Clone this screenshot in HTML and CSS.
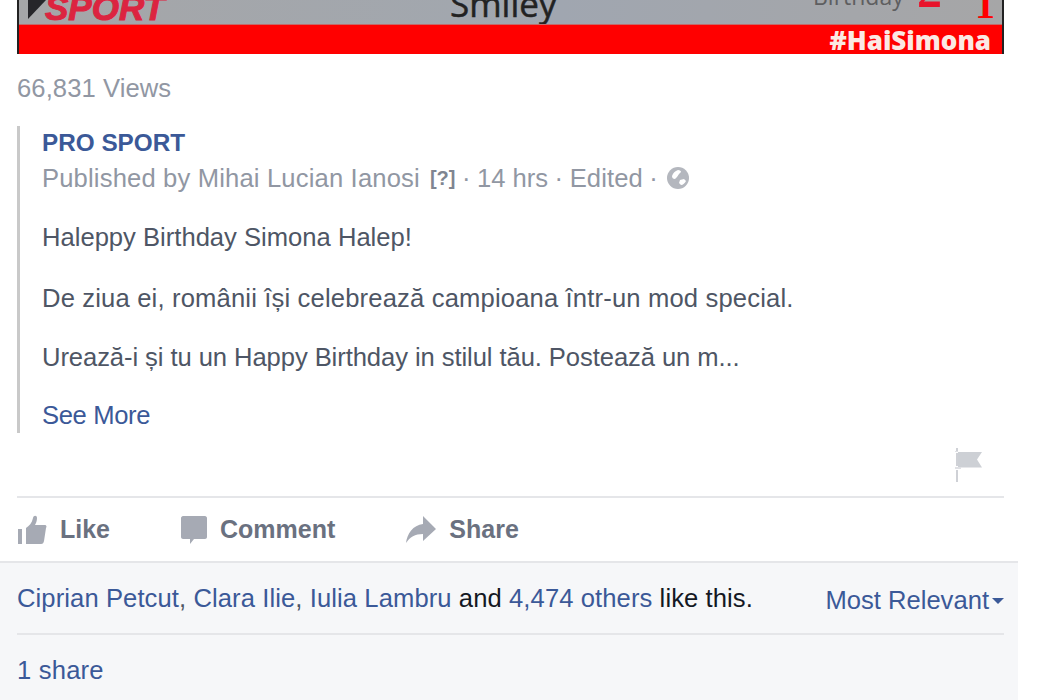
FILE: index.html
```html
<!DOCTYPE html>
<html lang="en">
<head>
	<meta charset="UTF-8">
	<title>PRO SPORT post</title>
	<link rel="stylesheet" href="styles.css">
</head>
<body>
	<div class="wrap">
		<div class="main">
			<div class="video">
				<div class="video-pic">
					<svg class="logo-arrow" width="18" height="19" viewBox="0 0 18 19"><path d="M0 0h18L0 19z" fill="#26262a"/></svg>
					<span class="logo">SPORT</span>
					<span class="smiley">Smiley</span>
					<span class="bday">Birthday</span>
					<span class="num-a">2</span>
					<span class="num-b">1</span>
				</div>
				<div class="video-bar"><span class="tag">#HaiSimona</span></div>
			</div>
			<div class="views">66,831 Views</div>

			<div class="quote">
				<a class="page-name">PRO SPORT</a>
				<div class="meta">
					<span class="by">Published by Mihai Lucian Ianosi</span>
					<span class="hint">[?]</span>
					<span class="dot">·</span>
					<span>14 hrs</span>
					<span class="dot">·</span>
					<span class="edited">Edited</span>
					<span class="dot">·</span>
					<svg class="globe" width="22" height="22" viewBox="0 0 22 22">
						<circle cx="11" cy="11" r="11" fill="#b4b7be"/>
						<path d="M5 9c1-3 3-5 6-6 2 0 3 1 3 2l-2 2-2 3-2 2c-2 0-3-1-3-3zM13 13l4-1 2 2c-1 2-3 4-5 4l-2-2z" fill="#fff"/>
					</svg>
				</div>
				<p class="txt">Haleppy Birthday Simona Halep!</p>
				<p class="txt line-b">De ziua ei, românii își celebrează campioana într-un mod special.</p>
				<p class="txt line-c">Urează-i și tu un Happy Birthday in stilul tău. Postează un m...</p>
				<a class="more">See More</a>
			</div>

			<div class="flag-row">
				<svg class="flag" width="28" height="34" viewBox="0 0 28 34">
					<path d="M3 4h24l-5 7.500 5 8H3z" fill="#cdd0d5"/>
					<path d="M1 0h2v3H1zM1 5h2v13H1zM1 22h2v12H1z" fill="#cfd1d6"/>
					<path d="M0 3h3v1H0zM0 19h6v2H0z" fill="#dfe0e4"/>
				</svg>
			</div>

			<div class="actions">
				<a class="action">
					<svg width="30" height="30" viewBox="0 0 30 30">
						<path d="M1 14h4v15H1zM9 13c3-2 6-5 7-10 .5-3 4-3 4 0 0 3-1 5-2 7h10c1.500 0 2 2 1 3l-2 13c-.5 2-1 3-3 3H9z" fill="#a6aab4"/>
					</svg>
					Like
				</a>
				<a class="action">
					<svg width="26" height="28" viewBox="0 0 26 28">
						<path d="M2 0h22c1 0 2 1 2 2v19c0 1-1 2-2 2H13l-4 5v-5H2c-1 0-2-1-2-2V2C0 1 1 0 2 0z" fill="#a6aab4"/>
					</svg>
					Comment
				</a>
				<a class="action">
					<svg width="30" height="28" viewBox="0 0 30 28">
						<path d="M17 0l13 13-13 12v-7C9 18 4 21 0 27c1-9 7-18 17-19z" fill="#a6aab4"/>
					</svg>
					Share
				</a>
			</div>
		</div>

		<div class="foot">
			<div class="likes">
				<span class="names"><a>Ciprian Petcut</a>, <a>Clara Ilie</a>, <a>Iulia Lambru</a> <em>and</em> <a>4,474 others</a> <em>like this.</em></span>
				<a class="sort">Most Relevant<i class="caret"></i></a>
			</div>
			<div class="shares"><a>1 share</a></div>
		</div>
	</div>
</body>
</html>
```

FILE: styles.css
```css
html, body{ margin: 0; padding: 0; background: #fff;}
body{ height: 700px; overflow: hidden; font-family: "Liberation Sans", Arial, sans-serif; font-size: 25.6px; color: #4e5665;}
a{ color: #3b5998; text-decoration: none;}
p{ margin: 0;}

.wrap{ width: 1018px;}
.main{ padding: 0 14px 0 17px; border-bottom: 2px solid #e5e6e9;}

.video{ display: flex; flex-direction: column; height: 54px; overflow: hidden; background: #f00; border: solid #222; border-width: 0 2px 0 2px; box-sizing: border-box;}
.video-pic{ position: relative; height: 25px; background: linear-gradient(90deg, #a5a6a8 0%, #a2a7ae 45%, #a0a6b0 55%, #a6a6a7 100%); border-bottom: 1px solid #c46a6a; box-sizing: border-box; overflow: hidden;}
.video-bar{ display: flex; justify-content: flex-end; align-items: center; flex: 1; padding-right: 11px; background: #f00;}
.tag{ font-family: "Open Sans", sans-serif; font-size: 26px; font-weight: 800; line-height: 28px; color: #fbe9e4;}
.logo-arrow{ position: absolute; left: 9px; top: 0;}
.logo{ position: absolute; left: 26px; bottom: -1px; font-size: 35px; line-height: 35px; font-weight: bold; font-style: italic; color: #dc2440; -webkit-text-stroke: 1px #dc2440;}
.smiley{ position: absolute; left: 431px; bottom: 3px; font-family: "Open Sans", sans-serif; font-size: 35px; line-height: 35px; -webkit-text-stroke: .5px #222; color: #222;}
.bday{ position: absolute; left: 794px; bottom: 13px; font-family: "Open Sans", sans-serif; font-size: 23px; line-height: 30px; color: #5e5e60;}
.num-a{ position: absolute; left: 898px; bottom: 9px; font-family: "Liberation Serif", serif; font-size: 50px; line-height: 50px; font-weight: bold; color: #e8142c;}
.num-b{ position: absolute; left: 956px; bottom: 9px; font-family: "Liberation Serif", serif; font-size: 40px; line-height: 20px; font-weight: bold; color: #f00;}

.views{ margin-top: 19px; height: 30px; line-height: 30px; letter-spacing: .08px; color: #9197a3;}

.quote{ margin-top: 24px; padding-left: 22px; border-left: 3px solid #c9c9c9; height: 307px;}
.page-name{ display: block; height: 33px; line-height: 33px; font-weight: bold; font-size: 24.3px; margin-top: -1px; color: #3b5998;}
.meta{ display: flex; align-items: center; height: 36px; line-height: 36px; margin-top: 1px; color: #9197a3;}
.by{ letter-spacing: .16px;}
.hint{ margin-left: 10px; font-size: 20px; font-weight: bold; color: #7f8591;}
.dot{ margin: 0 6.5px;}
.edited{ letter-spacing: .1px;}
.globe{ margin-left: 3px;}
.txt{ margin-top: 23px; height: 37px; line-height: 37px;}
.line-b{ margin-top: 24px; letter-spacing: .16px;}
.line-c{ margin-top: 22px; letter-spacing: -.08px;}
.more{ display: block; margin-top: 21px; height: 36px; line-height: 36px; letter-spacing: -.35px;}

.flag-row{ display: flex; justify-content: flex-end; height: 65px; padding: 15px 20px 0 0; box-sizing: border-box; border-bottom: 2px solid #e5e6e9;}
.flag{ margin-right: 1px;}

.actions{ display: flex; gap: 71px; height: 63px; align-items: center;}
.action{ display: flex; align-items: center; gap: 13px; font-size: 25px; font-weight: bold; color: #6a7180;}
.action svg{ display: block;}

.foot{ background: #f6f7f9; height: 138px; padding: 0 14px 0 17px;}
.likes{ display: flex; justify-content: space-between; align-items: center; height: 70px; border-bottom: 2px solid #e5e6e9;}
.names{ letter-spacing: .09px;}
.likes em{ font-style: normal; color: #141823;}
.sort{ display: flex; align-items: center; gap: 3px; margin-top: 5px;}
.caret{ width: 0; height: 0; border: 6px solid transparent; border-top: 6px solid #3b5998; border-bottom: 0;}
.shares{ height: 68px; line-height: 70px; letter-spacing: .2px;}
```
